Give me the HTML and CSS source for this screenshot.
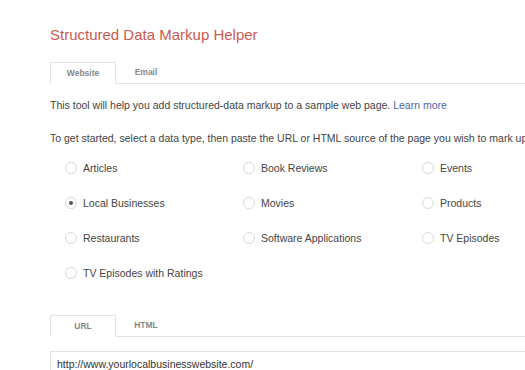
FILE: index.html
```html
<!DOCTYPE html>
<html lang="en">
<head>
<meta charset="UTF-8">
<title>Structured Data Markup Helper</title>
<link rel="stylesheet" href="styles.css">
</head>
<body>

<div class="page">
    <h1 class="title">Structured Data Markup Helper</h1>

    <div class="tabs">
        <div class="tab active">Website</div>
        <div class="tab">Email</div>
    </div>

    <p class="intro">This tool will help you add structured-data markup to a sample web page. <a href="#">Learn more</a></p>
    <p class="intro">To get started, select a data type, then paste the URL or HTML source of the page you wish to mark up.</p>

    <div class="types">
        <label class="type"><span class="radio"></span>Articles</label>
        <label class="type"><span class="radio"></span>Book Reviews</label>
        <label class="type"><span class="radio"></span>Events</label>
        <label class="type"><span class="radio checked"></span>Local Businesses</label>
        <label class="type"><span class="radio"></span>Movies</label>
        <label class="type"><span class="radio"></span>Products</label>
        <label class="type"><span class="radio"></span>Restaurants</label>
        <label class="type"><span class="radio"></span>Software Applications</label>
        <label class="type"><span class="radio"></span>TV Episodes</label>
        <label class="type"><span class="radio"></span>TV Episodes with Ratings</label>
    </div>

    <div class="tabs source-tabs">
        <div class="tab active">URL</div>
        <div class="tab">HTML</div>
    </div>

    <div class="url-box">http://www.yourlocalbusinesswebsite.com/</div>
</div>

</body>
</html>
```

FILE: styles.css
```css
body {
    margin: 0;
    font-family: "Liberation Sans", Arial, sans-serif;
    color: #444;
    background: #fff;
    overflow: hidden;
}

.page {
    padding: 26px 0 0 50px;
    width: 475px;
    overflow: hidden;
}

.title {
    margin: 0;
    font-size: 15px;
    font-weight: normal;
    color: #cc5a4e;
    line-height: 17px;
}

.tabs {
    display: flex;
    margin-top: 19px;
    border-bottom: 1px solid #e3e3e3;
    height: 21px;
}

.tab {
    width: 66px;
    box-sizing: border-box;
    text-align: center;
    font-size: 8.5px;
    font-weight: bold;
    color: #888;
    line-height: 20px;
}

.tab + .tab {
    width: 60px;
}

.tab.active {
    border: 1px solid #e3e3e3;
    border-bottom: 1px solid #fff;
    height: 22px;
    background: #fff;
}

.intro {
    margin: 0;
    font-size: 10.5px;
    line-height: 12px;
    white-space: nowrap;
}

.tabs + .intro {
    margin-top: 15px;
}

.intro + .intro {
    margin-top: 21px;
}

.intro a {
    color: #4a66a8;
    text-decoration: none;
}

.types {
    display: grid;
    grid-template-columns: 178px 179px 100px;
    grid-auto-rows: 35px;
    margin-top: 6px;
    padding-left: 15px;
}

.type {
    display: flex;
    align-items: center;
    font-size: 10.5px;
    color: #444;
}

.radio {
    width: 10px;
    height: 10px;
    border: 1px solid #d9d9d9;
    border-radius: 50%;
    margin-right: 6px;
    position: relative;
    flex: none;
}

.radio.checked::after {
    content: "";
    position: absolute;
    left: 3px;
    top: 3px;
    width: 4px;
    height: 4px;
    border-radius: 50%;
    background: #555;
}

.source-tabs {
    margin-top: 25px;
}

.url-box {
    margin-top: 14px;
    border: 1px solid #e3e3e3;
    border-right: none;
    padding: 0 6px;
    height: 26px;
    line-height: 24px;
    font-size: 10.5px;
    color: #333;
}
```
